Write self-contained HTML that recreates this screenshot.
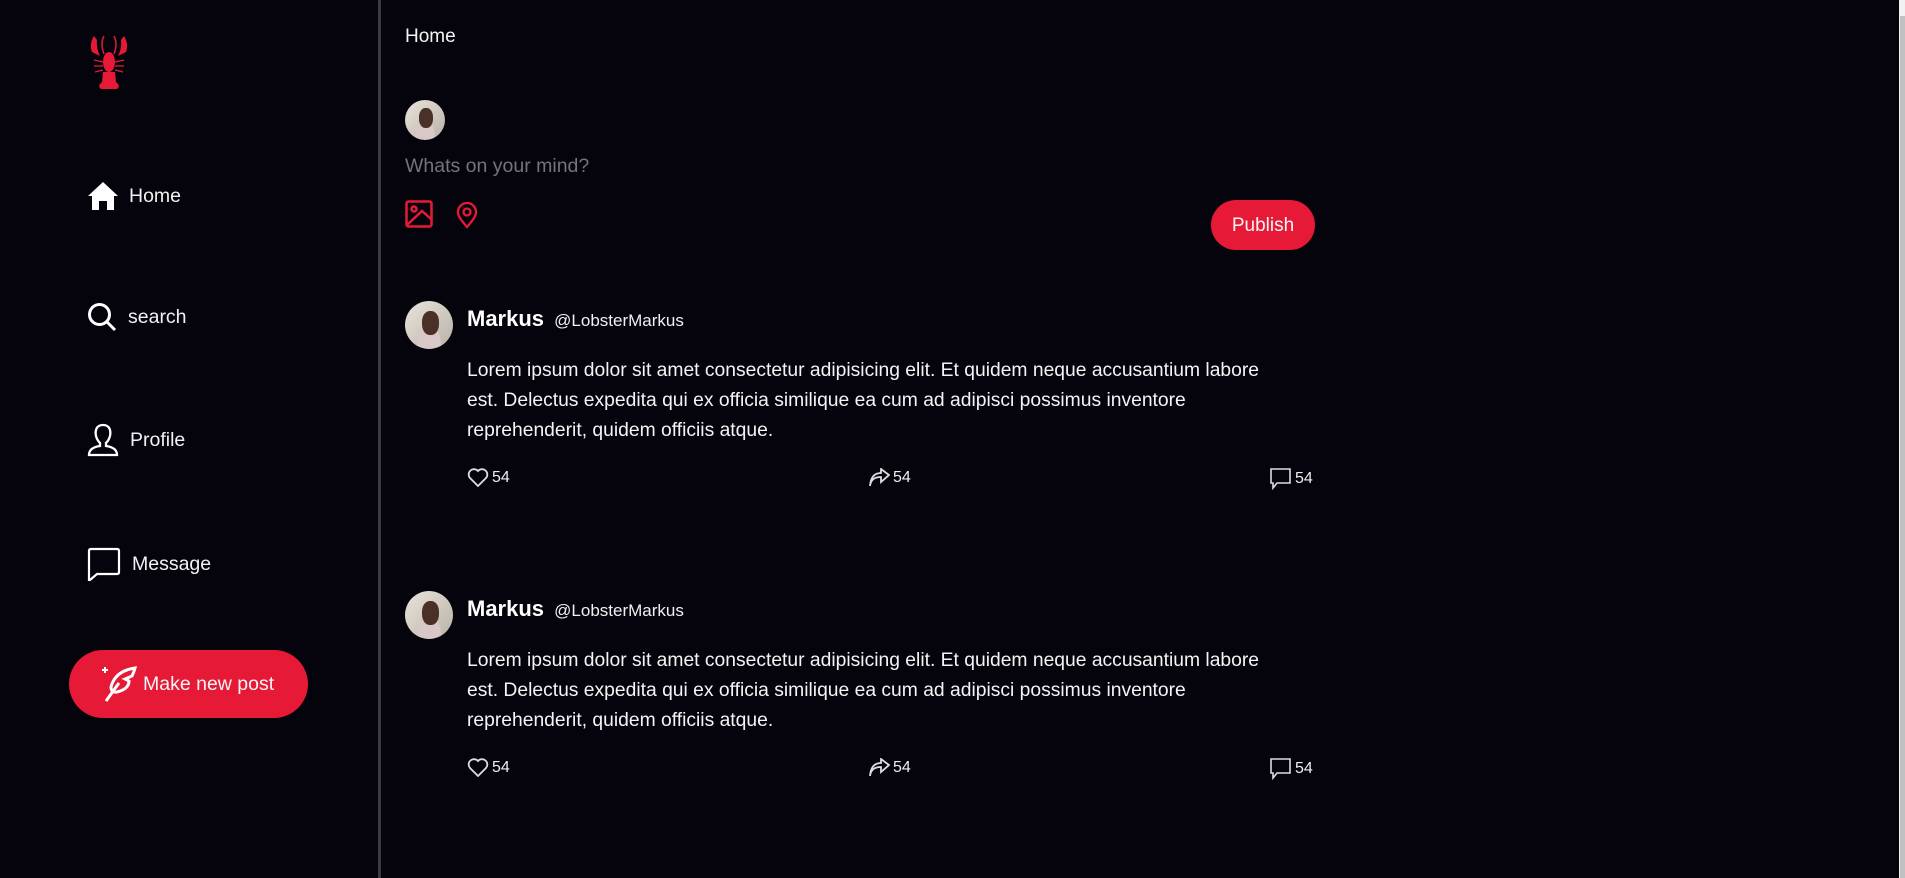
<!DOCTYPE html>
<html><head><meta charset="utf-8"><style>
*{margin:0;padding:0;box-sizing:border-box}
body{width:1905px;height:878px;background:#05040d;font-family:"Liberation Sans",sans-serif;color:#fff;position:relative;overflow:hidden}
.a{position:absolute}
.nav{position:absolute;left:87px;display:flex;align-items:center;font-size:19.5px;color:#f2f2f2}
.nav svg{margin-right:11px}
.av{position:absolute;border-radius:50%;overflow:hidden;background:radial-gradient(ellipse at 50% 95%,#d8c8c8 0 35%,transparent 36%),linear-gradient(135deg,#e9e4dc,#b9b1a6)}
.av::after{content:"";position:absolute;left:35%;top:20%;width:35%;height:50%;border-radius:45%;background:#4a3027}
.txt{font-size:19.3px;line-height:30px;color:#f4f4f4;width:810px}
.act{font-size:16px;color:#eee;display:flex;align-items:center;gap:3px}
</style></head><body>
<div class="a" style="left:378px;top:0;width:3px;height:878px;background:#3b3a42"></div>
<div class="a" style="left:1899px;top:0;width:6px;height:878px;background:#f1f1f1"></div>
<div class="a" style="left:1900px;top:16px;width:5px;height:862px;background:#c1c1c1"></div>

<svg class="a" style="left:88px;top:34px" width="42" height="56" viewBox="0 0 42 56" fill="#e61a37">
<path d="M6 2 Q1 10 4 18 L12 22 Q8 14 9 6 Z"/><path d="M36 2 Q41 10 38 18 L30 22 Q34 14 33 6 Z"/>
<path d="M16 2 Q12 10 16 20 M26 2 Q30 10 26 20" stroke="#e61a37" stroke-width="1.5" fill="none"/>
<ellipse cx="21" cy="28" rx="6" ry="10"/><path d="M15 38 L27 38 L28 48 Q33 52 29 55 L13 55 Q9 52 14 48 Z"/>
<path d="M15 28 L6 26 M15 32 L6 32 M15 36 L7 38 M27 28 L36 26 M27 32 L36 32 M27 36 L35 38" stroke="#e61a37" stroke-width="1.3"/>
</svg>

<div class="nav" style="top:181px"><svg width="32" height="30" viewBox="0 0 32 30" fill="#fff"><path d="M16 1 L31 15 L27 15 L27 29 L20 29 L20 20 L12 20 L12 29 L5 29 L5 15 L1 15 Z"/></svg><span style="margin-left:-1px">Home</span></div>
<div class="nav" style="top:302px"><svg width="30" height="30" viewBox="0 0 30 30" fill="none" stroke="#fff" stroke-width="3"><circle cx="12.5" cy="12.5" r="10"/><path d="M20 20 L28 28"/></svg>search</div>
<div class="nav" style="top:423px"><svg width="32" height="34" viewBox="0 0 32 34" fill="none" stroke="#fff" stroke-width="2.3"><path d="M16 2 C9 2 8 8 9 13 C10 17 12 19 13 20 L13 23 C6 24 2 27 2 32 L30 32 C30 27 26 24 19 23 L19 20 C20 19 22 17 23 13 C24 8 23 2 16 2 Z"/></svg>Profile</div>
<div class="nav" style="top:547px"><svg width="34" height="34" viewBox="0 0 34 34" fill="none" stroke="#fff" stroke-width="2.2"><path d="M2 4 Q2 2 4 2 L30 2 Q32 2 32 4 L32 25 Q32 27 30 27 L10 27 L3 33 L2 33 Z"/></svg>Message</div>

<div class="a" style="left:69px;top:650px;width:239px;height:68px;border-radius:34px;background:#e61a37;display:flex;align-items:center;padding-left:30px;font-size:19.5px;color:#f4f4f4">
<svg width="40" height="38" viewBox="0 0 40 38" fill="none" stroke="#fff" stroke-width="3" style="margin-right:4px"><path d="M3 5 L9 5 M6 2 L6 8" stroke-width="2"/><path d="M36 3 Q16 6 12 22 Q12 28 18 27 Q30 24 30 16 L26 14 L33 11 Q35 7 36 3 Z M20 18 L7 36"/></svg>Make new post</div>

<div class="a" style="left:405px;top:26px;font-size:19px;color:#f4f4f4">Home</div>
<div class="av" style="left:405px;top:100px;width:40px;height:40px"></div>
<div class="a" style="left:405px;top:155px;font-size:19.5px;color:#76737a">Whats on your mind?</div>
<svg class="a" style="left:405px;top:200px" width="28" height="28" viewBox="0 0 28 28" fill="none" stroke="#e61a37" stroke-width="2.5"><rect x="1.5" y="1.5" width="25" height="25" rx="2"/><circle cx="9" cy="9" r="2.5"/><path d="M2 25 L17 11 L26 19"/></svg>
<svg class="a" style="left:456px;top:202px" width="22" height="27" viewBox="0 0 22 27" fill="none" stroke="#e61a37" stroke-width="2.3"><path d="M11 25 C5 18 2 14 2 10 A9 9 0 0 1 20 10 C20 14 17 18 11 25 Z"/><circle cx="11" cy="10" r="3.5"/></svg>
<div class="a" style="left:1211px;top:200px;width:104px;height:50px;border-radius:25px;background:#e61a37;display:flex;align-items:center;justify-content:center;font-size:19px;color:#f4f4f4;padding-top:2px">Publish</div>

<!-- post 1 -->
<div class="av" style="left:405px;top:301px;width:48px;height:48px"></div>
<div class="a" style="left:467px;top:306px;font-size:22px;font-weight:bold">Markus <span style="font-size:17px;font-weight:normal;margin-left:4px;color:#f0f0f0">@LobsterMarkus</span></div>
<div class="a txt" style="left:467px;top:356px">Lorem ipsum dolor sit amet consectetur adipisicing elit. Et quidem neque accusantium labore est. Delectus expedita qui ex officia similique ea cum ad adipisci possimus inventore reprehenderit, quidem officiis atque.</div>
<div class="a act" style="left:467px;top:468px"><svg width="22" height="20" viewBox="0 0 22 20" fill="none" stroke="#ddd" stroke-width="1.8"><path d="M11 18 L3 10 A5 5 0 0 1 11 3 A5 5 0 0 1 19 10 Z"/></svg>54</div>
<div class="a act" style="left:868px;top:468px"><svg width="22" height="20" viewBox="0 0 22 20" fill="none" stroke="#ddd" stroke-width="1.8"><path d="M2 18 Q3 9 13 9 L13 14 L21 7 L13 1 L13 5 Q3 5 2 18 Z"/></svg>54</div>
<div class="a act" style="left:1270px;top:468px"><svg width="22" height="22" viewBox="0 0 22 22" fill="none" stroke="#ddd" stroke-width="1.6"><path d="M1 1 L20 1 L20 15 L7 15 L3 20 L3 15 L1 15 Z"/></svg>54</div>

<!-- post 2 -->
<div class="av" style="left:405px;top:591px;width:48px;height:48px"></div>
<div class="a" style="left:467px;top:596px;font-size:22px;font-weight:bold">Markus <span style="font-size:17px;font-weight:normal;margin-left:4px;color:#f0f0f0">@LobsterMarkus</span></div>
<div class="a txt" style="left:467px;top:646px">Lorem ipsum dolor sit amet consectetur adipisicing elit. Et quidem neque accusantium labore est. Delectus expedita qui ex officia similique ea cum ad adipisci possimus inventore reprehenderit, quidem officiis atque.</div>
<div class="a act" style="left:467px;top:758px"><svg width="22" height="20" viewBox="0 0 22 20" fill="none" stroke="#ddd" stroke-width="1.8"><path d="M11 18 L3 10 A5 5 0 0 1 11 3 A5 5 0 0 1 19 10 Z"/></svg>54</div>
<div class="a act" style="left:868px;top:758px"><svg width="22" height="20" viewBox="0 0 22 20" fill="none" stroke="#ddd" stroke-width="1.8"><path d="M2 18 Q3 9 13 9 L13 14 L21 7 L13 1 L13 5 Q3 5 2 18 Z"/></svg>54</div>
<div class="a act" style="left:1270px;top:758px"><svg width="22" height="22" viewBox="0 0 22 22" fill="none" stroke="#ddd" stroke-width="1.6"><path d="M1 1 L20 1 L20 15 L7 15 L3 20 L3 15 L1 15 Z"/></svg>54</div>
</body></html>
